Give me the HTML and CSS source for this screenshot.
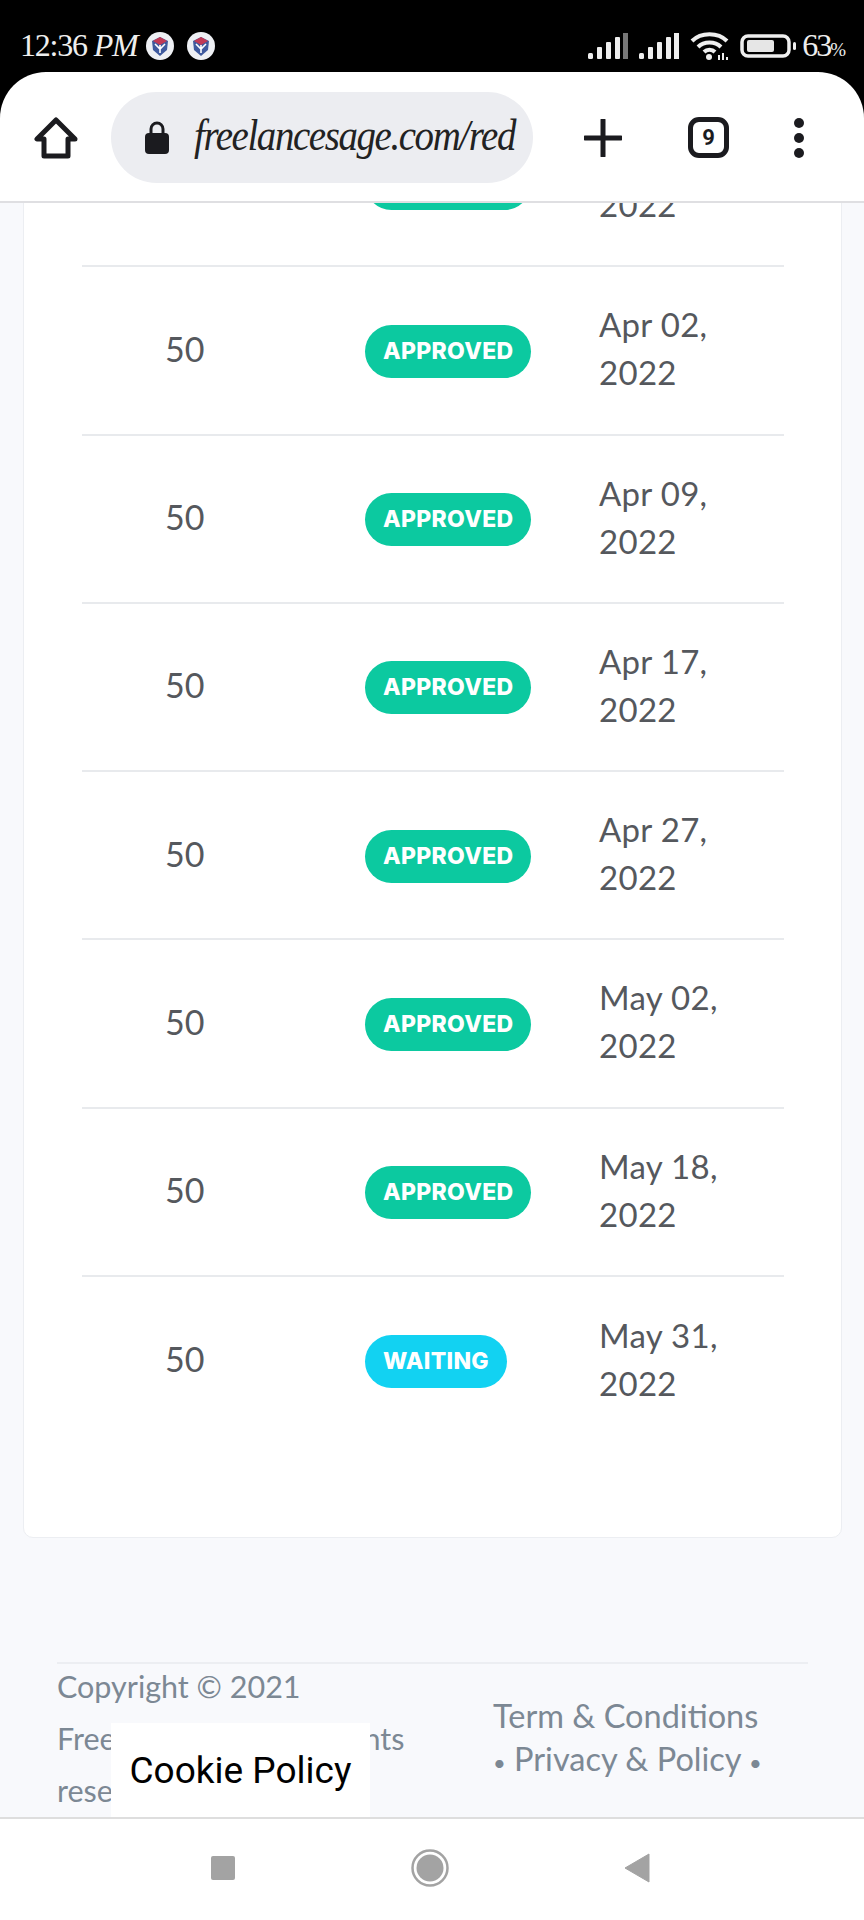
FILE: index.html
```html
<!DOCTYPE html>
<html>
<head>
    <title>FreelanceSage - Redeem History</title>
    <meta name="viewport" content="width=device-width, initial-scale=1.0">
    <link rel="stylesheet" href="styles.css">
</head>
<body>
    <!-- Phone status bar -->
    <div class="status-bar">
        <div class="status-left">
            <span class="clock">12:36 <i>PM</i></span>
            <svg class="notif" viewBox="0 0 28 28"><circle cx="14" cy="14" r="14" fill="#eef0f4"/><path d="M6 9l8-4 8 4-1 9-7 6-7-6z" fill="#3f5a9e"/><path d="M7 9l7-4 7 4-7 4z" fill="#c23a55"/><path d="M14 13v8M9 12l5 5 5-5" fill="none" stroke="#fff" stroke-width="1.6"/></svg>
            <svg class="notif" viewBox="0 0 28 28"><circle cx="14" cy="14" r="14" fill="#eef0f4"/><path d="M6 9l8-4 8 4-1 9-7 6-7-6z" fill="#3f5a9e"/><path d="M7 9l7-4 7 4-7 4z" fill="#c23a55"/><path d="M14 13v8M9 12l5 5 5-5" fill="none" stroke="#fff" stroke-width="1.6"/></svg>
        </div>
        <div class="status-right">
            <svg class="signal" width="40" height="26" viewBox="0 0 40 26"><rect x="0" y="20" width="5" height="6" rx="1.5" fill="#eee"/><rect x="9" y="14" width="5" height="12" rx="1" fill="#eee"/><rect x="18" y="9" width="5" height="17" rx="1" fill="#eee"/><rect x="27" y="4" width="5" height="22" rx="1" fill="#eee"/><rect x="35" y="0" width="5" height="26" fill="#777"/></svg>
            <svg class="signal" width="40" height="26" viewBox="0 0 40 26"><rect x="0" y="20" width="5" height="6" rx="1.5" fill="#eee"/><rect x="9" y="14" width="5" height="12" rx="1" fill="#eee"/><rect x="18" y="9" width="5" height="17" rx="1" fill="#eee"/><rect x="27" y="4" width="5" height="22" rx="1" fill="#eee"/><rect x="35" y="0" width="5" height="26" fill="#eee"/></svg>
            <svg width="40" height="30" viewBox="0 0 40 30"><g fill="none" stroke="#eee" stroke-width="4"><path d="M2 10C11 1 28 1 37 10"/><path d="M8 16c6-6 17-6 23 0"/><path d="M14 21c3-3 8-3 11 0"/></g><circle cx="19" cy="26" r="3" fill="#eee"/><path d="M29 29v-5M33 29v-7M37 29v-3" stroke="#eee" stroke-width="2"/></svg>
            <svg width="57" height="24" viewBox="0 0 57 24"><rect x="2" y="2" width="47" height="20" rx="6" fill="none" stroke="#eee" stroke-width="3.5"/><rect x="7" y="6" width="27" height="12" rx="2" fill="#e6e6e6"/><rect x="53" y="8" width="3" height="8" rx="1.5" fill="#eee"/></svg>
            <span class="battery-text">63<small>%</small></span>
        </div>
    </div>

    <!-- Browser toolbar -->
    <div class="toolbar">
        <svg class="home-icon" width="44" height="42" viewBox="0 0 44 42"><path d="M22 3L3 22h7v17h24V22h7z" fill="none" stroke="#1b1b1f" stroke-width="5" stroke-linejoin="round"/></svg>
        <div class="url-pill">
            <svg width="26" height="33" viewBox="0 0 26 33"><path d="M7 14V8a6 6 0 0 1 12 0v6" fill="none" stroke="#1b1b1f" stroke-width="3"/><rect x="1" y="12" width="24" height="21" rx="4" fill="#1b1b1f"/></svg>
            <span class="url-text">freelancesage.com/red</span>
        </div>
        <svg class="plus-icon" width="38" height="38" viewBox="0 0 38 38"><path d="M19 1v36M1 19h36" stroke="#1b1b1f" stroke-width="5" stroke-linecap="round"/></svg>
        <div class="tab-count">9</div>
        <div class="menu-dots"><span></span><span></span><span></span></div>
    </div>

    <div class="page">
        <div class="card">
            <div class="row">
                <div class="amount">50</div>
                <div><span class="badge approved">APPROVED</span></div>
                <div class="date">Mar 28,<br>2022</div>
            </div>
            <div class="row">
                <div class="amount">50</div>
                <div><span class="badge approved">APPROVED</span></div>
                <div class="date">Apr 02,<br>2022</div>
            </div>
            <div class="row">
                <div class="amount">50</div>
                <div><span class="badge approved">APPROVED</span></div>
                <div class="date">Apr 09,<br>2022</div>
            </div>
            <div class="row">
                <div class="amount">50</div>
                <div><span class="badge approved">APPROVED</span></div>
                <div class="date">Apr 17,<br>2022</div>
            </div>
            <div class="row">
                <div class="amount">50</div>
                <div><span class="badge approved">APPROVED</span></div>
                <div class="date">Apr 27,<br>2022</div>
            </div>
            <div class="row">
                <div class="amount">50</div>
                <div><span class="badge approved">APPROVED</span></div>
                <div class="date">May 02,<br>2022</div>
            </div>
            <div class="row">
                <div class="amount">50</div>
                <div><span class="badge approved">APPROVED</span></div>
                <div class="date">May 18,<br>2022</div>
            </div>
            <div class="row">
                <div class="amount">50</div>
                <div><span class="badge waiting">WAITING</span></div>
                <div class="date">May 31,<br>2022</div>
            </div>
        </div>

        <div class="footer">
            <div class="copyright">Copyright © 2021<br>FreelanceSage.in All rights<br>reserved.</div>
            <div class="footer-links">Term &amp; Conditions<br><span class="dot">•</span> Privacy &amp; Policy <span class="dot">•</span></div>
        </div>

        <div class="cookie-box">Cookie Policy</div>
    </div>

    <!-- Android navigation -->
    <div class="nav-bar">
        <svg width="26" height="26" viewBox="0 0 26 26"><rect x="1" y="1" width="24" height="24" rx="2" fill="#a3a3a3"/></svg>
        <svg width="38" height="38" viewBox="0 0 38 38"><circle cx="19" cy="19" r="17.5" fill="none" stroke="#a3a3a3" stroke-width="2.5"/><circle cx="19" cy="19" r="13.5" fill="#a3a3a3"/></svg>
        <svg width="26" height="30" viewBox="0 0 26 30"><path d="M25 1v28L1 15z" fill="#a3a3a3" stroke="#a3a3a3" stroke-linejoin="round"/></svg>
    </div>
</body>
</html>
```

FILE: styles.css
```css
* {
    box-sizing: border-box;
}

body {
    margin: 0;
    width: 864px;
    height: 1920px;
    overflow: hidden;
    background: #000;
    font-family: 'Lato', sans-serif;
    display: flex;
    flex-direction: column;
}

.status-bar {
    height: 72px;
    flex-shrink: 0;
    padding: 20px 19px 0 20px;
    display: flex;
    justify-content: space-between;
    align-items: center;
    color: #eee;
}

.status-left {
    display: flex;
    align-items: center;
}

.clock {
    width: 126px;
    margin-top: -2px;
    font-family: 'Liberation Serif', serif;
    font-size: 32px;
    letter-spacing: -1.2px;
    white-space: nowrap;
}

.notif {
    width: 28px;
    height: 28px;
    margin-right: 13px;
}

.status-right {
    display: flex;
    align-items: center;
    gap: 10px;
}

.status-right .signal + svg {
    margin-left: 1px;
}

.battery-text {
    margin-left: -5px;
    margin-top: -2px;
    font-family: 'Liberation Serif', serif;
    font-size: 32px;
    letter-spacing: -2px;
}

.battery-text small {
    font-size: 19px;
    letter-spacing: -1px;
}

.toolbar {
    height: 131px;
    flex-shrink: 0;
    background: #fff;
    border-radius: 46px 46px 0 0;
    border-bottom: 2px solid #dfdfe2;
    display: flex;
    align-items: center;
    padding: 2px 0 0 34px;
    position: relative;
    z-index: 2;
}

.home-icon {
    margin-right: 33px;
}

.url-pill {
    width: 422px;
    height: 91px;
    border-radius: 46px;
    background: #ecedf1;
    display: flex;
    align-items: center;
    gap: 24px;
    padding: 0 0 0 33px;
    overflow: hidden;
    flex-shrink: 0;
}

.url-pill svg {
    flex-shrink: 0;
}

.url-text {
    margin-top: -5px;
    font-family: 'Liberation Serif', serif;
    font-style: italic;
    font-size: 44px;
    letter-spacing: -1.6px;
    color: #222;
    white-space: nowrap;
    display: inline-block;
    transform: scaleX(0.885);
    transform-origin: left center;
}

.plus-icon {
    margin-left: 51px;
}

.tab-count {
    width: 41px;
    height: 41px;
    margin-left: 66px;
    border: 5px solid #1b1b1f;
    border-radius: 11px;
    font-family: 'Roboto', sans-serif;
    font-weight: 700;
    font-size: 22px;
    color: #1b1b1f;
    display: flex;
    align-items: center;
    justify-content: center;
}

.menu-dots {
    margin-left: 65px;
    display: flex;
    flex-direction: column;
    gap: 5px;
}

.menu-dots span {
    width: 10px;
    height: 10px;
    border-radius: 50%;
    background: #1b1b1f;
}

.page {
    flex: 1;
    background: #f8f9fc;
    overflow: hidden;
    position: relative;
}

.card {
    width: 819px;
    margin: -105px 0 0 23px;
    padding: 0 57px 92px 58px;
    background: #fff;
    border: 1px solid #eceef2;
    border-radius: 10px;
}

.row {
    height: 168.25px;
    display: grid;
    grid-template-columns: 283px 234px 1fr;
    align-items: center;
    border-bottom: 2px solid #e8eaed;
}

.row:last-child {
    border-bottom: none;
}

.amount {
    padding: 0 0 4px 83px;
    font-size: 34px;
    color: #55585d;
}

.date {
    padding-bottom: 4px;
    font-size: 33px;
    letter-spacing: 0.3px;
    line-height: 48px;
    color: #55585d;
}

.badge {
    display: inline-block;
    height: 53px;
    line-height: 53px;
    margin-top: 2px;
    padding: 0 18px;
    border-radius: 27px;
    font-family: 'Inter', sans-serif;
    font-size: 23px;
    font-weight: 800;
    letter-spacing: 0.3px;
    color: #fff;
}

.approved {
    background: #0cc9a0;
}

.waiting {
    background: #12d2f2;
}

.footer {
    margin: 124px 56px 0 57px;
    border-top: 2px solid #eceef2;
    display: flex;
    font-size: 30.5px;
    color: #7c8894;
}

.copyright {
    width: 436px;
    flex-shrink: 0;
    margin-top: -4px;
    line-height: 52px;
    white-space: nowrap;
}

.footer-links {
    padding-top: 30px;
    font-size: 32.5px;
    line-height: 43px;
    white-space: nowrap;
}

.dot {
    font-size: 22px;
}

.cookie-box {
    position: absolute;
    left: 111px;
    top: 1520px;
    width: 259px;
    height: 94px;
    background: #fff;
    font-family: 'Roboto', sans-serif;
    font-size: 37px;
    color: #000;
    display: flex;
    align-items: center;
    justify-content: center;
}

.nav-bar {
    height: 103px;
    flex-shrink: 0;
    background: #fff;
    border-top: 2px solid #dedede;
    display: flex;
    align-items: center;
    justify-content: space-between;
    padding: 0 214px 4px 210px;
}
```
